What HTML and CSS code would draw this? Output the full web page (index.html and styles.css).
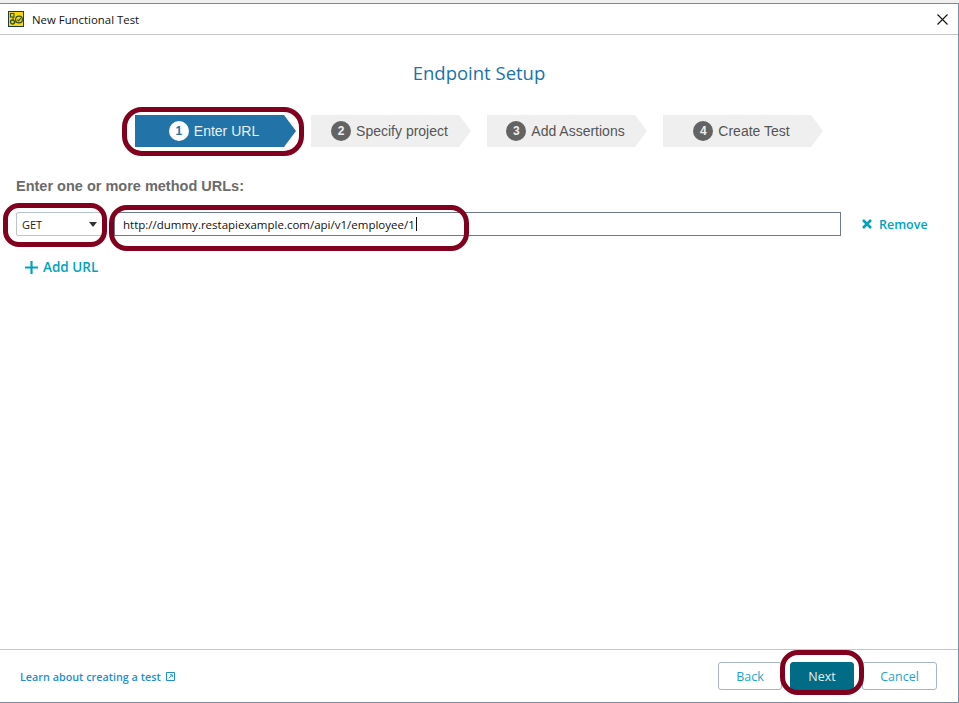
FILE: index.html
```
<!DOCTYPE html>
<html lang="en">
<head>
<meta charset="utf-8">
<title>New Functional Test</title>
<link rel="stylesheet" href="styles.css">
</head>
<body>
<div class="window">
  <header class="titlebar">
    <svg class="app-icon" width="16" height="16" viewBox="0 0 16 16">
      <rect x="0.5" y="0.5" width="15" height="15" fill="#f5d90a" stroke="#1f3a4a"/>
      <rect x="2.5" y="2.5" width="3.5" height="3.5" fill="none" stroke="#33502a" stroke-width="1.1"/>
      <circle cx="4.5" cy="11" r="2" fill="none" stroke="#33502a" stroke-width="1.3"/>
      <path d="M5 6v3M6.5 11h2" stroke="#33502a" fill="none"/>
      <circle cx="11" cy="8.5" r="3.4" fill="none" stroke="#33502a" stroke-width="1.2"/>
      <path d="M9.3 8.5l1.3 1.4 2.2-2.8" fill="none" stroke="#33502a" stroke-width="1.1"/>
    </svg>
    <span class="window-title">New Functional Test</span>
    <svg class="close" width="11" height="11" viewBox="0 0 11 11"><path d="M.5.5l10 10M10.5.5l-10 10" stroke="#111" stroke-width="1.1" fill="none"/></svg>
  </header>

  <main class="content">
    <h1 class="heading">Endpoint Setup</h1>
    <ol class="steps">
      <li class="step step-active"><span class="num">1</span>Enter URL</li>
      <li class="step"><span class="num">2</span>Specify project</li>
      <li class="step"><span class="num">3</span>Add Assertions</li>
      <li class="step"><span class="num">4</span>Create Test</li>
    </ol>
    <div class="form">
      <div class="form-label">Enter one or more method URLs:</div>
      <div class="url-row">
        <div class="method"><span>GET</span><i class="caret"></i></div>
        <div class="url"><span>http://dummy.restapiexample.com/api/v1/employee/1</span><i class="cursor"></i></div>
        <a class="remove">
          <svg width="12" height="12" viewBox="0 0 12 12"><path d="M2 2l8 8M10 2l-8 8" stroke="#00a3bd" stroke-width="2.6" fill="none"/></svg>
          Remove
        </a>
      </div>
      <a class="add-url">
        <svg width="13" height="13" viewBox="0 0 13 13"><path d="M6.5 0v13M0 6.5h13" stroke="#00a3bd" stroke-width="2.2" fill="none"/></svg>
        Add URL
      </a>
    </div>
  </main>

  <footer class="footer">
    <a class="learn">Learn about creating a test
      <svg width="9" height="9" viewBox="0 0 9 9"><path d="M.5.5h8v8h-8z" fill="none" stroke="#1c8fd0"/><path d="M3 6.2l3-3M4 2.8h2.3v2.3" fill="none" stroke="#1c8fd0"/></svg>
    </a>
    <div class="buttons">
      <button class="btn">Back</button>
      <button class="btn btn-primary">Next</button>
      <button class="btn">Cancel</button>
    </div>
  </footer>

  <span class="mark mark-step"></span>
  <span class="mark mark-method"></span>
  <span class="mark mark-url"></span>
  <span class="mark mark-next"></span>
</div>
</body>
</html>
```
FILE: styles.css
```
* { box-sizing: border-box; }
html, body { margin: 0; padding: 0; background: #fff; }
body { width: 959px; height: 703px; overflow: hidden; padding-top: 3px; background: linear-gradient(#f0f0f0 0 3px, #fff 3px); }
a { cursor: pointer; }

.window {
  position: relative;
  width: 959px;
  height: 700px;
  display: flex;
  flex-direction: column;
  background: #fff;
  border-top: 1px solid #7b8aa0;
  border-right: 1px solid #7b8aa0;
  border-bottom: 1px solid #7b8aa0;
  font-family: "Open Sans", "Noto Sans", sans-serif;
}

.titlebar {
  height: 31px;
  flex: none;
  display: flex;
  align-items: center;
  padding: 0 10px 0 8px;
  border-bottom: 1px solid #c8c8c8;
}
.app-icon { flex: none; }
.window-title { margin-left: 8px; font-size: 11.4px; color: #111; flex: 1; }
.close { flex: none; }

.content { flex: 1; display: flex; flex-direction: column; }
.heading {
  margin: 25px 0 0;
  text-align: center;
  font-size: 18.5px;
  line-height: 26px;
  font-weight: 400;
  color: #1a72a8;
}

.steps {
  list-style: none;
  margin: 29px 0 0;
  padding: 0;
  display: flex;
  justify-content: center;
  gap: 16px;
}
.step {
  width: 160px;
  height: 32px;
  display: flex;
  align-items: center;
  justify-content: center;
  gap: 5px;
  padding-right: 3px;
  background: #efefef;
  clip-path: polygon(0 0, calc(100% - 12px) 0, 100% 50%, calc(100% - 12px) 100%, 0 100%);
  color: #555;
  font-family: "Liberation Sans", Arial, sans-serif;
  font-size: 14px;
}
.step-active { width: 161px; margin-right: -1px; background: #2274a8; color: #e8f0f6; }
.num {
  width: 20px;
  height: 20px;
  border-radius: 50%;
  background: #636363;
  color: #eee;
  font-size: 12px;
  font-weight: 700;
  display: flex;
  align-items: center;
  justify-content: center;
}
.step-active .num { background: #fff; color: #2274a8; }

.form { padding: 0 16px; }
.form-label {
  margin-top: 31px;
  font-family: "Liberation Sans", Arial, sans-serif;
  font-size: 14.5px;
  line-height: 16px;
  font-weight: 700;
  color: #6b6b6b;
}
.url-row { margin-top: 18px; display: flex; align-items: center; }
.method {
  width: 88px;
  height: 24px;
  display: flex;
  align-items: center;
  justify-content: space-between;
  padding: 0 6px 0 5px;
  border: 1px solid #b9c4d0;
  border-radius: 2px;
  font-size: 11px;
  color: #222;
}
.caret { width: 0; height: 0; border: 4px solid transparent; border-top: 5px solid #333; border-bottom: 0; }
.url {
  width: 727px;
  height: 24px;
  margin-left: 10px;
  padding-left: 8px;
  display: flex;
  align-items: center;
  border: 1px solid #6f7a88;
  font-size: 11.5px;
  color: #111;
}
.cursor { width: 1px; height: 14px; background: #111; margin-left: 1px; }
.remove {
  margin-left: 20px;
  display: flex;
  align-items: center;
  gap: 6px;
  font-size: 12.5px;
  font-weight: 600;
  color: #00a3bd;
}
.add-url {
  margin: 22px 0 0 9px;
  display: inline-flex;
  align-items: center;
  gap: 5px;
  font-size: 13.5px;
  font-weight: 600;
  color: #00a3bd;
}

.footer {
  height: 53px;
  flex: none;
  display: flex;
  align-items: center;
  justify-content: space-between;
  padding: 0 21px 0 20px;
  border-top: 1px solid #c8c8c8;
}
.learn { display: flex; align-items: center; gap: 5px; font-size: 10.8px; font-weight: 600; color: #1c8fd0; }
.buttons { display: flex; gap: 8px; }
.btn {
  width: 64px;
  height: 28px;
  padding: 0;
  background: #fff;
  border: 1px solid #a9b5c2;
  border-radius: 3px;
  font-family: inherit;
  font-size: 12.5px;
  color: #1fa5c4;
}
.btn-primary { background: #006c85; border-color: #006c85; color: #e4eef1; }
.btn:last-child { width: 75px; }

.mark { position: absolute; border: 5px solid #80001e; pointer-events: none; }
.mark-step { left: 122px; top: 103px; width: 182px; height: 49px; border-radius: 20px; }
.mark-method { left: 3px; top: 199px; width: 104px; height: 44px; border-radius: 16px; }
.mark-url { left: 109px; top: 201px; width: 360px; height: 46px; border-radius: 18px; }
.mark-next { left: 780px; top: 646px; width: 84px; height: 45px; border-radius: 18px; }
```
